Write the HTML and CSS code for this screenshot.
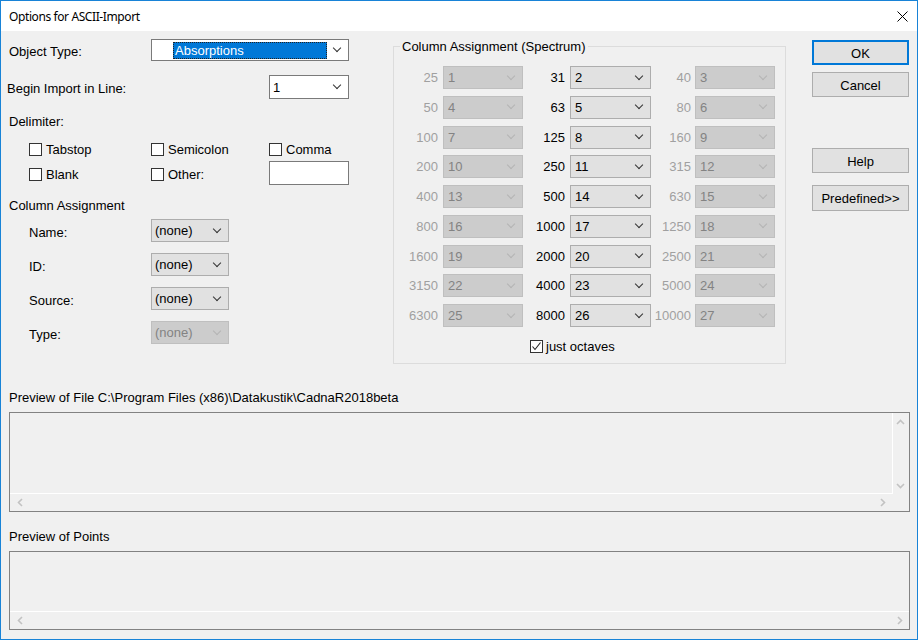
FILE: index.html
```html
<!DOCTYPE html>
<html lang="en">
<head>
  <meta charset="UTF-8">
  <title>Options for ASCII-Import</title>
  <link rel="stylesheet" href="styles.css">
</head>
<body>
  <div class="window">
    <div class="titlebar">
      <span class="title">Options for ASCII-Import</span>
      <svg class="close" width="11" height="11" viewBox="0 0 11 11">
        <path d="M0.5 0.5 L10.5 10.5 M10.5 0.5 L0.5 10.5" stroke="#000" stroke-width="1" fill="none"/>
      </svg>
    </div>

    <div class="client">
      <div class="top">
        <!-- left column -->
        <div class="left">
          <div class="field-row row-type">
            <span class="label">Object Type:</span>
            <div class="combo combo-white combo-type"><span class="selected">Absorptions</span></div>
          </div>
          <div class="field-row row-begin">
            <span class="label">Begin Import in Line:</span>
            <div class="combo combo-white combo-begin"><span>1</span></div>
          </div>

          <div class="group-label">Delimiter:</div>
          <div class="checks">
            <div class="check"><span class="box"></span>Tabstop</div>
            <div class="check"><span class="box"></span>Semicolon</div>
            <div class="check"><span class="box"></span>Comma</div>
            <div class="check lower"><span class="box"></span>Blank</div>
            <div class="check lower"><span class="box"></span>Other:</div>
            <div class="edit"></div>
          </div>

          <div class="group-label group-assign">Column Assignment</div>
          <div class="assign">
            <div class="assign-row"><span class="label">Name:</span><div class="combo"><span>(none)</span></div></div>
            <div class="assign-row"><span class="label">ID:</span><div class="combo"><span>(none)</span></div></div>
            <div class="assign-row"><span class="label">Source:</span><div class="combo"><span>(none)</span></div></div>
            <div class="assign-row"><span class="label">Type:</span><div class="combo disabled"><span>(none)</span></div></div>
          </div>
        </div>

        <!-- spectrum -->
        <fieldset class="spectrum">
          <legend>Column Assignment (Spectrum)</legend>
          <div class="spec-grid">
            <span class="freq off">25</span><div class="combo disabled"><span>1</span></div>
            <span class="freq">31</span><div class="combo"><span>2</span></div>
            <span class="freq off">40</span><div class="combo disabled"><span>3</span></div>

            <span class="freq off">50</span><div class="combo disabled"><span>4</span></div>
            <span class="freq">63</span><div class="combo"><span>5</span></div>
            <span class="freq off">80</span><div class="combo disabled"><span>6</span></div>

            <span class="freq off">100</span><div class="combo disabled"><span>7</span></div>
            <span class="freq">125</span><div class="combo"><span>8</span></div>
            <span class="freq off">160</span><div class="combo disabled"><span>9</span></div>

            <span class="freq off">200</span><div class="combo disabled"><span>10</span></div>
            <span class="freq">250</span><div class="combo"><span>11</span></div>
            <span class="freq off">315</span><div class="combo disabled"><span>12</span></div>

            <span class="freq off">400</span><div class="combo disabled"><span>13</span></div>
            <span class="freq">500</span><div class="combo"><span>14</span></div>
            <span class="freq off">630</span><div class="combo disabled"><span>15</span></div>

            <span class="freq off">800</span><div class="combo disabled"><span>16</span></div>
            <span class="freq">1000</span><div class="combo"><span>17</span></div>
            <span class="freq off">1250</span><div class="combo disabled"><span>18</span></div>

            <span class="freq off">1600</span><div class="combo disabled"><span>19</span></div>
            <span class="freq">2000</span><div class="combo"><span>20</span></div>
            <span class="freq off">2500</span><div class="combo disabled"><span>21</span></div>

            <span class="freq off">3150</span><div class="combo disabled"><span>22</span></div>
            <span class="freq">4000</span><div class="combo"><span>23</span></div>
            <span class="freq off">5000</span><div class="combo disabled"><span>24</span></div>

            <span class="freq off">6300</span><div class="combo disabled"><span>25</span></div>
            <span class="freq">8000</span><div class="combo"><span>26</span></div>
            <span class="freq off">10000</span><div class="combo disabled"><span>27</span></div>
          </div>
          <div class="octaves">
            <div class="check">
              <span class="box">
                <svg width="11" height="11" viewBox="0 0 11 11"><path d="M1.5 5.5 L4 8.5 L9.5 1.5" stroke="#222" stroke-width="1.1" fill="none"/></svg>
              </span>just octaves
            </div>
          </div>
        </fieldset>

        <!-- buttons -->
        <div class="buttons">
          <div class="btn btn-default">OK</div>
          <div class="btn btn-cancel">Cancel</div>
          <div class="btn btn-help">Help</div>
          <div class="btn btn-predef">Predefined&gt;&gt;</div>
        </div>
      </div>

      <div class="preview-label">Preview of File C:\Program Files (x86)\Datakustik\CadnaR2018beta</div>
      <div class="preview-box file-box">
        <div class="pane"></div>
        <div class="vscroll">
          <svg width="9" height="6" viewBox="0 0 9 6"><path d="M1 5 L4.5 1.5 L8 5" stroke="#c2c2c2" stroke-width="1.6" fill="none"/></svg>
          <svg width="9" height="6" viewBox="0 0 9 6"><path d="M1 1 L4.5 4.5 L8 1" stroke="#c2c2c2" stroke-width="1.6" fill="none"/></svg>
        </div>
        <div class="hscroll">
          <svg width="6" height="9" viewBox="0 0 6 9"><path d="M5 1 L1.5 4.5 L5 8" stroke="#c2c2c2" stroke-width="1.6" fill="none"/></svg>
          <svg width="6" height="9" viewBox="0 0 6 9"><path d="M1 1 L4.5 4.5 L1 8" stroke="#c2c2c2" stroke-width="1.6" fill="none"/></svg>
        </div>
        <div class="corner"></div>
      </div>

      <div class="preview-label points-label">Preview of Points</div>
      <div class="preview-box points-box">
        <div class="pane"></div>
        <div class="hscroll">
          <svg width="6" height="9" viewBox="0 0 6 9"><path d="M5 1 L1.5 4.5 L5 8" stroke="#c2c2c2" stroke-width="1.6" fill="none"/></svg>
          <svg width="6" height="9" viewBox="0 0 6 9"><path d="M1 1 L4.5 4.5 L1 8" stroke="#c2c2c2" stroke-width="1.6" fill="none"/></svg>
        </div>
      </div>
    </div>
  </div>
</body>
</html>
```

FILE: styles.css
```css
* {
  box-sizing: border-box;
}

body {
  margin: 0;
  background: #fff;
  font-family: "Liberation Sans", Arial, sans-serif;
  font-size: 13px;
  line-height: 15px;
  color: #000;
}

.window {
  width: 918px;
  height: 640px;
  border: 1px solid #1883d7;
  display: flex;
  flex-direction: column;
}

.titlebar {
  height: 30px;
  flex: none;
  background: #fff;
  display: flex;
  align-items: center;
  justify-content: space-between;
  padding: 0 9px 0 8px;
}

.title {
  font-family: "Noto Sans", "Open Sans", sans-serif;
  font-size: 12px;
  letter-spacing: -0.4px;
  color: #000;
}

.close {
  display: block;
}

.client {
  flex: 1;
  background: #f0f0f0;
  padding: 0 8px;
}

.top {
  display: flex;
  align-items: flex-start;
}

/* left column */
.left {
  width: 340px;
  margin-right: 44px;
}

.field-row {
  display: flex;
  align-items: center;
  justify-content: space-between;
}

.field-row .label {
  padding-top: 3px;
}

.row-type {
  margin-top: 8px;
  height: 22px;
}

.row-begin {
  margin-top: 14px;
  height: 24px;
}

.row-begin .label {
  margin-left: -2px;
  padding-top: 2px;
}

.group-label {
  margin-top: 15px;
}

.group-assign {
  margin-top: 13px;
}

.checks {
  display: grid;
  grid-template-columns: 122px 118px 100px;
  grid-template-rows: 13px 24px;
  row-gap: 5px;
  padding-left: 20px;
  margin-top: 14px;
  align-items: center;
}

.check {
  display: flex;
  align-items: center;
  gap: 4px;
  white-space: nowrap;
}

.check.lower {
  padding-top: 3px;
}

.box {
  width: 13px;
  height: 13px;
  flex: none;
  border: 1px solid #333;
  background: #fff;
  display: flex;
  align-items: center;
  justify-content: center;
}

.box svg {
  display: block;
}

.edit {
  width: 80px;
  height: 24px;
  border: 1px solid #7a7a7a;
  background: #fff;
}

.assign {
  padding-left: 20px;
  margin-top: 6px;
}

.assign-row {
  display: flex;
  align-items: center;
  height: 23px;
  margin-bottom: 11px;
}

.assign-row .label {
  width: 122px;
  padding-top: 3px;
}

.assign-row .combo {
  width: 78px;
}

/* combo boxes */
.combo {
  height: 23px;
  display: flex;
  align-items: center;
  padding-left: 3px;
  border: 1px solid #adadad;
  background: #e1e1e1;
  white-space: nowrap;
  overflow: hidden;
}

.combo::after {
  content: "";
  flex: none;
  margin-left: auto;
  margin-right: 8px;
  width: 5px;
  height: 5px;
  border-right: 1px solid #333;
  border-bottom: 1px solid #333;
  transform: translateY(-2px) rotate(45deg);
}

.combo.disabled {
  background: #cccccc;
  border-color: #bfbfbf;
  color: #838383;
}

.combo.disabled::after {
  border-color: #b4b4b4;
}

.combo-white {
  background: #fff;
  border-color: #7a7a7a;
}

.combo-type {
  width: 198px;
  height: 22px;
  padding-left: 21px;
}

.selected {
  width: 154px;
  height: 17px;
  line-height: 17px;
  padding-left: 2px;
  background: #0078d7;
  color: #fff;
  outline: 1px dotted #222;
  outline-offset: -1px;
}

.combo-begin {
  width: 80px;
  height: 24px;
}

/* spectrum group */
.spectrum {
  width: 393px;
  margin: 8px 0 0;
  padding: 12px 0 11px;
  border: 1px solid #dcdcdc;
  min-width: 0;
}

.spectrum legend {
  margin-left: 6px;
  padding: 0 2px;
  line-height: 15px;
}

.spec-grid {
  display: grid;
  grid-template-columns: 49px 80px 47px 81px 44px 80px;
  grid-auto-rows: 23px;
  row-gap: 6.75px;
}

.freq {
  text-align: right;
  padding-right: 5px;
  line-height: 23px;
}

.freq.off {
  color: #a0a0a0;
}

.spec-grid .freq:nth-child(6n+5) {
  padding-right: 4px;
}

.spec-grid .combo {
  padding-left: 4px;
}

.octaves {
  margin-top: 12px;
  padding-left: 136px;
  height: 13px;
}

.octaves .check {
  gap: 3px;
}

/* buttons */
.buttons {
  margin-left: 26px;
  margin-top: 9px;
  width: 97px;
  display: flex;
  flex-direction: column;
}

.btn {
  height: 25px;
  display: flex;
  align-items: center;
  justify-content: center;
  padding-top: 1px;
  background: #e1e1e1;
  border: 1px solid #adadad;
}

.btn-default {
  border: 2px solid #0078d7;
}

.btn-cancel {
  margin-top: 7px;
}

.btn-help {
  margin-top: 51px;
}

.btn-predef {
  margin-top: 12px;
  height: 26px;
}

/* previews */
.preview-label {
  margin-top: 26px;
}

.points-label {
  margin-top: 17px;
}

.preview-box {
  margin-top: 7px;
  width: 901px;
  border: 1px solid #828282;
  display: grid;
}

.file-box {
  height: 100px;
  grid-template-columns: 1fr 16px;
  grid-template-rows: 1fr 17px;
}

.file-box .pane {
  border-right: 1px solid #fff;
  border-bottom: 1px solid #fff;
}

.points-box {
  height: 79px;
  grid-template-columns: 1fr;
  grid-template-rows: 1fr 17px;
}

.points-box .pane {
  border-bottom: 1px solid #fff;
}

.vscroll {
  display: flex;
  flex-direction: column;
  justify-content: space-between;
  align-items: center;
  padding: 6px 1px 5px 0;
}

.hscroll {
  display: flex;
  justify-content: space-between;
  align-items: center;
  padding: 0 7px 0 7px;
}

.points-box .hscroll {
  padding-right: 6px;
}

.vscroll svg,
.hscroll svg {
  display: block;
}
```
